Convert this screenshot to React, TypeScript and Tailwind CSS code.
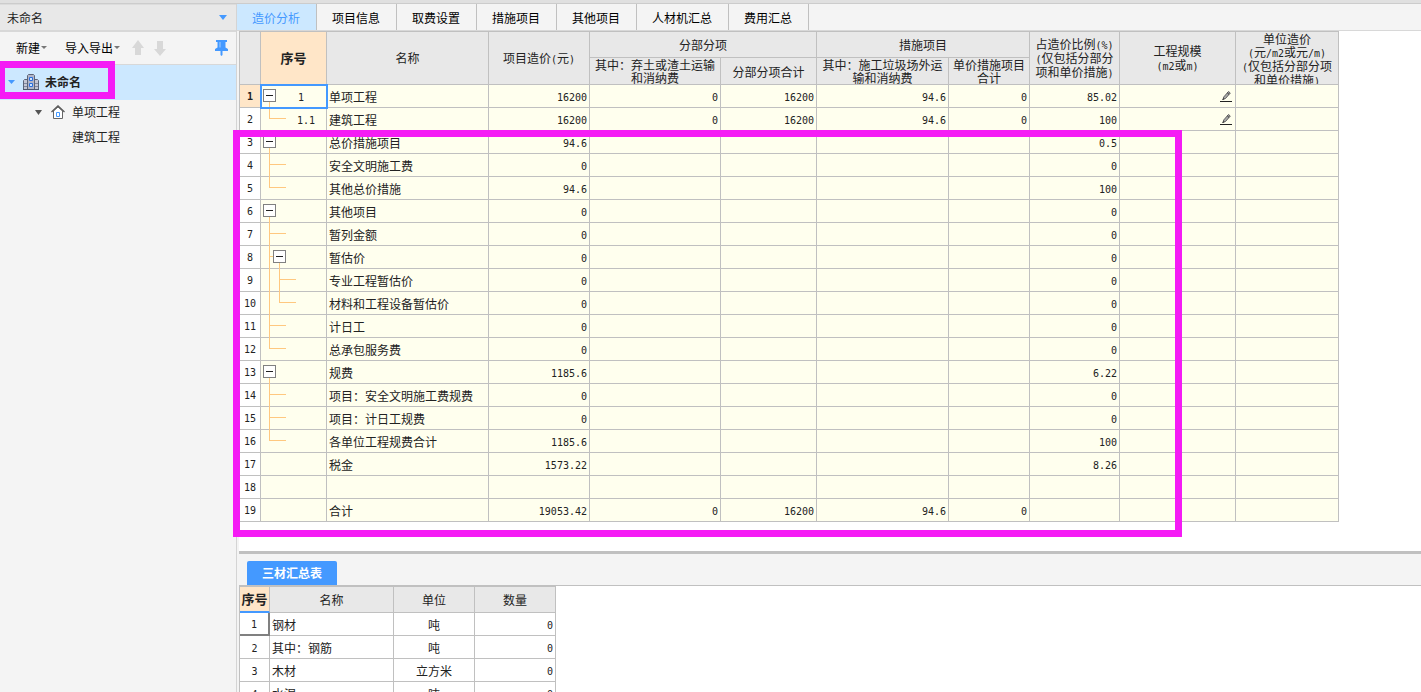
import React, { useState } from "react";

type Row = {
  tree?: string;
  no?: string;
  name: string;
  cost?: string;
  soil?: string;
  subTotal?: string;
  waste?: string;
  unitTotal?: string;
  ratio?: string;
  edit?: boolean;
};

const rows: Row[] = [
  { tree: "root", no: "1", name: "单项工程", cost: "16200", soil: "0", subTotal: "16200", waste: "94.6", unitTotal: "0", ratio: "85.02", edit: true },
  { tree: "last", no: "1.1", name: "建筑工程", cost: "16200", soil: "0", subTotal: "16200", waste: "94.6", unitTotal: "0", ratio: "100", edit: true },
  { tree: "root", name: "总价措施项目", cost: "94.6", ratio: "0.5" },
  { tree: "mid", name: "安全文明施工费", cost: "0", ratio: "0" },
  { tree: "last", name: "其他总价措施", cost: "94.6", ratio: "100" },
  { tree: "root", name: "其他项目", cost: "0", ratio: "0" },
  { tree: "mid", name: "暂列金额", cost: "0", ratio: "0" },
  { tree: "sub", name: "暂估价", cost: "0", ratio: "0" },
  { tree: "subMid", name: "专业工程暂估价", cost: "0", ratio: "0" },
  { tree: "subLast", name: "材料和工程设备暂估价", cost: "0", ratio: "0" },
  { tree: "mid", name: "计日工", cost: "0", ratio: "0" },
  { tree: "last", name: "总承包服务费", cost: "0", ratio: "0" },
  { tree: "root", name: "规费", cost: "1185.6", ratio: "6.22" },
  { tree: "mid", name: "项目：安全文明施工费规费", cost: "0", ratio: "0" },
  { tree: "mid", name: "项目：计日工规费", cost: "0", ratio: "0" },
  { tree: "last", name: "各单位工程规费合计", cost: "1185.6", ratio: "100" },
  { name: "税金", cost: "1573.22", ratio: "8.26" },
  { name: "" },
  { name: "合计", cost: "19053.42", soil: "0", subTotal: "16200", waste: "94.6", unitTotal: "0" },
];

const materials = [
  { name: "钢材", unit: "吨" },
  { name: "其中：钢筋", unit: "吨" },
  { name: "木材", unit: "立方米" },
  { name: "水泥", unit: "吨" },
];

const tabs = ["造价分析", "项目信息", "取费设置", "措施项目", "其他项目", "人材机汇总", "费用汇总"];

const treePaths: Record<string, string> = {
  root: "M8.5 17V23",
  mid: "M8.5 0V23M8.5 10.5H25",
  last: "M8.5 0V10.5H25",
  sub: "M8.5 0V23M8.5 10.5H12M18.5 17V23",
  subMid: "M8.5 0V23M18.5 0V23M18.5 10.5H35",
  subLast: "M8.5 0V23M18.5 0V10.5H35",
};

function TreeMark({ kind }: { kind: string }) {
  const boxX = kind === "root" ? 2 : kind === "sub" ? 12 : null;
  const mark = (
    <svg width={boxX === null ? 25 : boxX + 13} height="22" className="block overflow-visible" shapeRendering="crispEdges">
      <path d={treePaths[kind]} fill="none" stroke="#ffc880" />
      {boxX !== null && (
        <>
          <rect x={boxX + 0.5} y="4.5" width="12" height="12" fill="#fff" stroke="#808080" />
          <path d={`M${boxX + 3} 10.5h7`} stroke="#222" />
        </>
      )}
    </svg>
  );
  if (boxX === null) return mark;
  return <button aria-label="折叠" className="block shrink-0">{mark}</button>;
}

// latin runs use the half-width mono face
function Mixed({ text }: { text: string }) {
  return (
    <>
      {text.split(/([\x20-\x7e]+)/).map((part, i) =>
        i % 2 ? <span key={i} className="font-['DejaVu_Sans_Mono'] text-[10px] leading-none">{part}</span> : part
      )}
    </>
  );
}

function Triangle({ className }: { className: string }) {
  return (
    <svg viewBox="0 0 8 4" preserveAspectRatio="none" className={className} fill="currentColor">
      <path d="M0 0h8L4 4z" />
    </svg>
  );
}

function Arrow({ down }: { down?: boolean }) {
  return (
    <svg width="12" height="16" viewBox="0 0 12 16" fill="#d8d8d8">
      <path d={down ? "M3 1h6v8h3L6 16 0 9h3z" : "M6 0l6 8H9v7H3V8H0z"} />
    </svg>
  );
}

function Pencil() {
  return (
    <svg width="12" height="13" viewBox="0 0 12 13" fill="none">
      <path d="M3 9.500L3.700 7 8.500 1.500 10.300 3 5.500 8.500z" fill="#aaa" stroke="#555" strokeWidth=".9" />
      <path d="M2.500 10L4 8.200M7.300 2.800l1.800 1.700" stroke="#333" />
      <path d="M0 11.500h12" stroke="#222" shapeRendering="crispEdges" />
    </svg>
  );
}

function Sidebar() {
  return (
    <aside className="w-[237px] shrink-0 border-r border-[#d4d4d4] bg-[#f4f4f4]">
      <div className="relative h-7 border-t border-b-2 border-t-[#dcdcdc] border-b-[#d8d8d8] bg-[#e8e8e8]">
        <select aria-label="项目" className="block h-full w-full appearance-none bg-transparent pl-[7px] outline-none">
          <option>未命名</option>
        </select>
        <Triangle className="pointer-events-none absolute right-[9px] top-[10px] h-[5px] w-[8px] text-[#4499ff]" />
      </div>
      <div className="flex h-[33px] items-center border-b border-[#d8d8d8] pb-px pl-4 pr-2 text-black">
        <button className="flex items-center gap-px">
          新建
          <Triangle className="h-[3px] w-[6px] text-[#777]" />
        </button>
        <button className="ml-[18px] flex items-center gap-px">
          导入导出
          <Triangle className="h-[3px] w-[6px] text-[#777]" />
        </button>
        <button aria-label="上移" className="ml-3"><Arrow /></button>
        <button aria-label="下移" className="ml-[10px]"><Arrow down /></button>
        <button aria-label="固定" className="ml-auto">
          <svg width="13" height="16" viewBox="0 0 13 16" fill="#4499ff">
            <path d="M1 0h11v2H10.500v5.500L13 9v2H7.500v4l-1 1-1-1v-4H0V9l2.500-1.500V2H1z" />
            <path d="M5 2v5.500" stroke="#a8d0ff" />
          </svg>
        </button>
      </div>
      <ul>
        <li className="flex h-[35px] items-center bg-[#cce8ff] pb-px pl-2 font-bold">
          <Triangle className="h-[4px] w-[7px] text-[#4499ff]" />
          <svg width="16" height="16" viewBox="0 0 16 16" className="ml-2 mr-[6px]" fill="none">
            <path d="M.5 15V6.500l1-1H5V15M11 15V5.500h3.500l1 1V15" fill="#c4c6d4" stroke="#5c6478" />
            <path d="M4.500 15V1.500l1-1h5l1 1V15" fill="#b0b4c8" stroke="#5c6478" />
            <path d="M1 9.500h3M1 12.500h3M12 9.500h3M12 12.500h3" stroke="#8088a0" />
            <path d="M0 15.500h16" stroke="#4c566e" />
            <path d="M6.500 3.500h3v3h-3zM6.500 9.500h3v3h-3z" fill="#cfe4ff" stroke="#2a6fdc" />
          </svg>
          未命名
        </li>
        <li className="flex h-[25px] items-center pb-px pl-[35px]">
          <Triangle className="h-[5px] w-[7px] text-[#555]" />
          <svg width="14" height="14" viewBox="0 0 14 14" className="ml-[9px] mr-[7px]" fill="none">
            <path d="M2.500 6v7.500h9V6L7 2z" fill="#fff" stroke="#666" />
            <path d="M.5 7L7 .8 13.500 7" stroke="#555" strokeWidth="1.200" />
            <path d="M5.500 7.500h3v4h-3z" stroke="#4499ff" />
          </svg>
          单项工程
        </li>
        <li className="flex h-[25px] items-center pb-px pl-[72px]">建筑工程</li>
      </ul>
    </aside>
  );
}

const th = "border-b border-r border-[#c0c0c0] bg-[#e8e8e8] p-0 text-center font-normal";
const td = "h-[23px] border-b border-r border-[#c0c0c0] p-0";
const num = "h-[23px] border-b border-r border-[#c0c0c0] p-0 pr-[2px] pt-1 text-right font-['DejaVu_Sans_Mono'] text-[10px] leading-[18px]";

function CostTable() {
  return (
    <table className="w-[1100px] table-fixed border-separate border-spacing-0 border-l border-t border-[#c0c0c0]">
      <colgroup>
        <col className="w-[21px]" />
        <col className="w-[66px]" />
        <col className="w-[162px]" />
        <col className="w-[101px]" />
        <col className="w-[131px]" />
        <col className="w-[96px]" />
        <col className="w-[132px]" />
        <col className="w-[81px]" />
        <col className="w-[90px]" />
        <col className="w-[116px]" />
        <col className="w-[103px]" />
      </colgroup>
      <thead className="leading-[14px]">
        <tr className="h-[26px]">
          <th rowSpan={2} className={th}></th>
          <th rowSpan={2} className="border-b border-r border-[#c0c0c0] bg-[#ffe6c8] p-0 text-[13px] font-bold">序号</th>
          <th rowSpan={2} className={th}>名称</th>
          <th rowSpan={2} className={th}><Mixed text="项目造价(元)" /></th>
          <th colSpan={2} className={th}>分部分项</th>
          <th colSpan={2} className={th}>措施项目</th>
          <th rowSpan={2} className={th}>
            <Mixed text="占造价比例(%)" /><br />
            <Mixed text="(仅包括分部分" /><br />
            <Mixed text="项和单价措施)" />
          </th>
          <th rowSpan={2} className={th}>
            工程规模<br />
            <Mixed text="(m2或m)" />
          </th>
          <th rowSpan={2} className={th}>
            <div className="h-[52px] overflow-hidden whitespace-nowrap leading-[13px]">
              <p>单位造价</p>
              <p><Mixed text="(元/m2或元/m)" /></p>
              <p><Mixed text="(仅包括分部分项" /></p>
              <p><Mixed text="和单价措施)" /></p>
            </div>
          </th>
        </tr>
        <tr className="h-[27px] leading-[13px]">
          <th className={th}>其中：弃土或渣土运输<br />和消纳费</th>
          <th className={th}>分部分项合计</th>
          <th className={th}>其中：施工垃圾场外运<br />输和消纳费</th>
          <th className={th}>单价措施项目<br />合计</th>
        </tr>
      </thead>
      <tbody className="bg-[#ffffee]">
        {rows.map((row, i) => (
          <tr key={i}>
            <th className={`h-[23px] border-b border-r border-[#c0c0c0] p-0 pt-[2px] text-center font-['DejaVu_Sans_Mono'] text-[10px] leading-[18px] ${i === 0 ? "bg-[#ffe6c8] font-bold" : "bg-white font-normal"}`}>
              {i + 1}
            </th>
            <td className={i === 0 ? `${td} relative outline-2 -outline-offset-1 outline-[#4499ff]` : td}>
              <div className="flex h-[22px]">
                {row.tree && <TreeMark kind={row.tree} />}
                <span className="flex-1 pt-1 text-center font-['DejaVu_Sans_Mono'] text-[10px] leading-[18px]">{row.no}</span>
              </div>
            </td>
            <td className={`${td} pl-[2px] pt-[2px] leading-5`}>{row.name}</td>
            <td className={num}>{row.cost}</td>
            <td className={num}>{row.soil}</td>
            <td className={num}>{row.subTotal}</td>
            <td className={num}>{row.waste}</td>
            <td className={num}>{row.unitTotal}</td>
            <td className={num}>{row.ratio}</td>
            <td className={td}>
              {row.edit && <button aria-label="编辑" className="ml-auto mr-[3px] block"><Pencil /></button>}
            </td>
            <td className={td}></td>
          </tr>
        ))}
      </tbody>
    </table>
  );
}

function MaterialTable() {
  return (
    <table className="w-[317px] table-fixed border-separate border-spacing-0 border-l border-t border-[#c0c0c0]">
      <colgroup>
        <col className="w-[30px]" />
        <col className="w-[124px]" />
        <col className="w-[81px]" />
        <col className="w-[81px]" />
      </colgroup>
      <thead>
        <tr className="h-[26px] leading-5">
          <th className="border-b-2 border-r border-b-[#4499ff] border-r-[#c0c0c0] bg-[#ffe6c8] p-0 text-[13px] font-bold">序号</th>
          <th className={th}>名称</th>
          <th className={th}>单位</th>
          <th className={th}>数量</th>
        </tr>
      </thead>
      <tbody>
        {materials.map((m, i) => (
          <tr key={m.name}>
            <td className={`h-[23px] p-0 pt-[3px] text-center font-['DejaVu_Sans_Mono'] text-[10px] leading-[18px] ${i === 0 ? "border-b-2 border-r-2 border-[#808080]" : "border-b border-r border-[#c0c0c0]"}`}>
              {i + 1}
            </td>
            <td className={`${td} pl-[2px] pt-[2px] leading-5`}>{m.name}</td>
            <td className={`${td} pt-[2px] text-center leading-5`}>{m.unit}</td>
            <td className={num}>0</td>
          </tr>
        ))}
      </tbody>
    </table>
  );
}

export default function App() {
  const [active, setActive] = useState(0);

  return (
    <div className="relative flex h-screen flex-col overflow-hidden bg-white font-['Noto_Sans_CJK_SC',sans-serif] text-[12px] leading-4 text-[#222]">
      <div className="h-1 shrink-0 border-b border-[#cccccc] bg-[#e0e0e0]"></div>
      <div className="flex min-h-0 flex-1">
        <Sidebar />
        <main className="flex min-w-0 flex-1 flex-col">
          <nav className="flex h-[27px] shrink-0 border-b border-[#d8d8d8] bg-[#f4f4f4]">
            {tabs.map((tab, i) => (
              <button
                key={tab}
                onClick={() => setActive(i)}
                className={`border-r border-[#c0c0c0] pl-[15px] pr-4 pt-[2px] ${active === i ? "bg-[#cce8ff] text-[#4499ff]" : "text-black"}`}
              >
                {tab}
              </button>
            ))}
          </nav>
          <div className="flex min-h-0 flex-1 flex-col border-l-2 border-[#f4f4f4]">
            <section className="min-h-0 flex-1 overflow-hidden">
              <CostTable />
            </section>
            <section className="h-[141px] shrink-0 overflow-hidden border-t-[3px] border-[#c0c0c0]">
              <div className="flex h-8 items-end border-b border-[#c0c0c0] bg-[#f4f4f4] pl-2">
                <button className="h-6 rounded-t-xs bg-[#4499ff] px-[15px] font-bold text-white">三材汇总表</button>
              </div>
              <MaterialTable />
            </section>
          </div>
        </main>
      </div>
      <div className="pointer-events-none absolute -left-0.5 top-[61px] h-[38px] w-[117px] border-7 border-[#f51bf5]"></div>
      <div className="pointer-events-none absolute left-[233px] top-[130px] h-[407px] w-[949px] border-7 border-[#f51bf5]"></div>
    </div>
  );
}
